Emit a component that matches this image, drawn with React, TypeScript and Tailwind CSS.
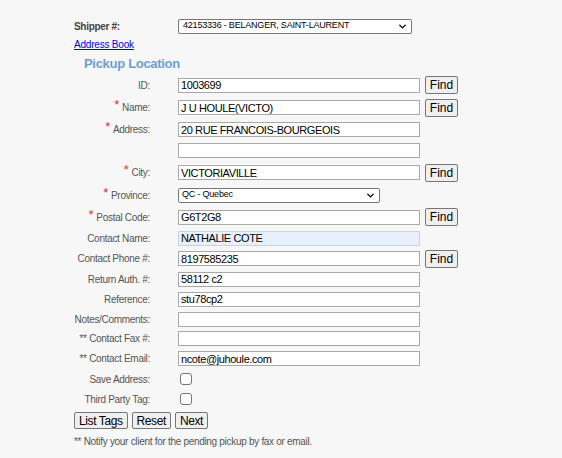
import React from 'react';
import { ChevronDown } from 'lucide-react';

const labelCls = 'w-[76px] shrink-0 text-right text-[10px] tracking-[-0.3px] text-[#555] whitespace-nowrap';
const inputCls =
  'ml-[28px] w-[242px] h-[15px] border border-[#a9a9a9] px-[2px] text-[11px] tracking-[-0.4px] leading-[13px] text-black outline-none';

const FindBtn = () => (
  <button className="ml-[5px] h-[18px] w-[33px] rounded-[2px] border border-[#767676] bg-[#efefef] text-[12px] leading-none text-black">
    Find
  </button>
);

const Req = () => <span className="mr-[3px] text-[13px] leading-none text-[#e0302f] relative top-[-2px]">*</span>;

type Row = {
  label?: string;
  req?: boolean;
  value?: string;
  find?: boolean;
  h: string;
  hl?: boolean;
};

const rows: Row[] = [
  { label: 'ID:', value: '1003699', find: true, h: 'h-[22px]' },
  { label: 'Name:', req: true, value: 'J U HOULE(VICTO)', find: true, h: 'h-[23px]' },
  { label: 'Address:', req: true, value: '20 RUE FRANCOIS-BOURGEOIS', h: 'h-[21px]' },
  { value: '', h: 'h-[21px]' },
  { label: 'City:', req: true, value: 'VICTORIAVILLE', find: true, h: 'h-[23px]' },
];

const rows2: Row[] = [
  { label: 'Postal Code:', req: true, value: 'G6T2G8', find: true, h: 'h-[22px]' },
  { label: 'Contact Name:', value: 'NATHALIE COTE', h: 'h-[20px]', hl: true },
  { label: 'Contact Phone #:', value: '8197585235', find: true, h: 'h-[21px]' },
  { label: 'Return Auth. #:', value: '58112 c2', h: 'h-[20px]' },
  { label: 'Reference:', value: 'stu78cp2', h: 'h-[20px]' },
  { label: 'Notes/Comments:', value: '', h: 'h-[20px]' },
  { label: '** Contact Fax #:', value: '', h: 'h-[19px]' },
  { label: '** Contact Email:', value: 'ncote@juhoule.com', h: 'h-[21px]' },
];

const FieldRow = ({ r }: { r: Row }) => (
  <div className={`flex items-center ${r.h}`}>
    <div className={labelCls}>
      {r.req && <Req />}
      {r.label}
    </div>
    <input
      readOnly
      value={r.value}
      className={`${inputCls} ${r.hl ? 'bg-[#e8f0fe] border-[#c8d4e6]' : 'bg-white'}`}
    />
    {r.find && <FindBtn />}
  </div>
);

const CheckRow = ({ label }: { label: string }) => (
  <div className="flex h-[20px] items-center">
    <div className={labelCls}>{label}</div>
    <span className="ml-[30px] h-[12px] w-[12px] rounded-[3px] border border-[#767676] bg-white" />
  </div>
);

export default function App() {
  return (
    <div
      className="min-h-[458px] w-full bg-[#f7f7f7] pl-[74px] pt-[18px]"
      style={{ fontFamily: '"Liberation Sans", Arial, sans-serif' }}
    >
      <div className="flex h-[16px] items-center">
        <div className="w-[104px] text-[10px] font-bold tracking-[-0.3px] text-[#444]">Shipper #:</div>
        <div className="flex h-[15px] w-[234px] items-center justify-between rounded-[2px] border border-[#767676] bg-white pl-[4px] pr-[3px] text-[9px] tracking-[-0.2px] text-black">
          <span>42153336 - BELANGER, SAINT-LAURENT</span>
          <ChevronDown className="h-[11px] w-[11px]" strokeWidth={3} />
        </div>
      </div>
      <a className="mt-[4px] block text-[10px] tracking-[-0.2px] leading-[14px] text-[#0000ee] underline">Address Book</a>
      <div className="ml-[10px] mt-[3px] h-[18px] text-[13px] font-bold tracking-[-0.3px] leading-[18px] text-[#6b9fd1]">
        Pickup Location
      </div>
      <div className="mt-[1px]">
        {rows.map((r, i) => (
          <FieldRow key={i} r={r} />
        ))}
        <div className="flex h-[22px] items-center">
          <div className={labelCls}>
            <Req />
            Province:
          </div>
          <div className="ml-[28px] flex h-[15px] w-[202px] items-center justify-between rounded-[2px] border border-[#767676] bg-white pl-[3px] pr-[3px] text-[9px] tracking-[-0.2px] text-black">
            <span>QC - Quebec</span>
            <ChevronDown className="h-[11px] w-[11px]" strokeWidth={3} />
          </div>
        </div>
        {rows2.map((r, i) => (
          <FieldRow key={i} r={r} />
        ))}
        <CheckRow label="Save Address:" />
        <CheckRow label="Third Party Tag:" />
      </div>
      <div className="mt-[3px] flex gap-[4px]">
        {['List Tags', 'Reset', 'Next'].map((b) => (
          <button
            key={b}
            className="h-[17px] rounded-[2px] border border-[#767676] bg-[#efefef] px-[4px] text-[12px] tracking-[-0.4px] leading-none text-black"
          >
            {b}
          </button>
        ))}
      </div>
      <p className="mt-[5px] text-[10px] tracking-[-0.3px] text-[#555]">** Notify your client for the pending pickup by fax or email.</p>
    </div>
  );
}
